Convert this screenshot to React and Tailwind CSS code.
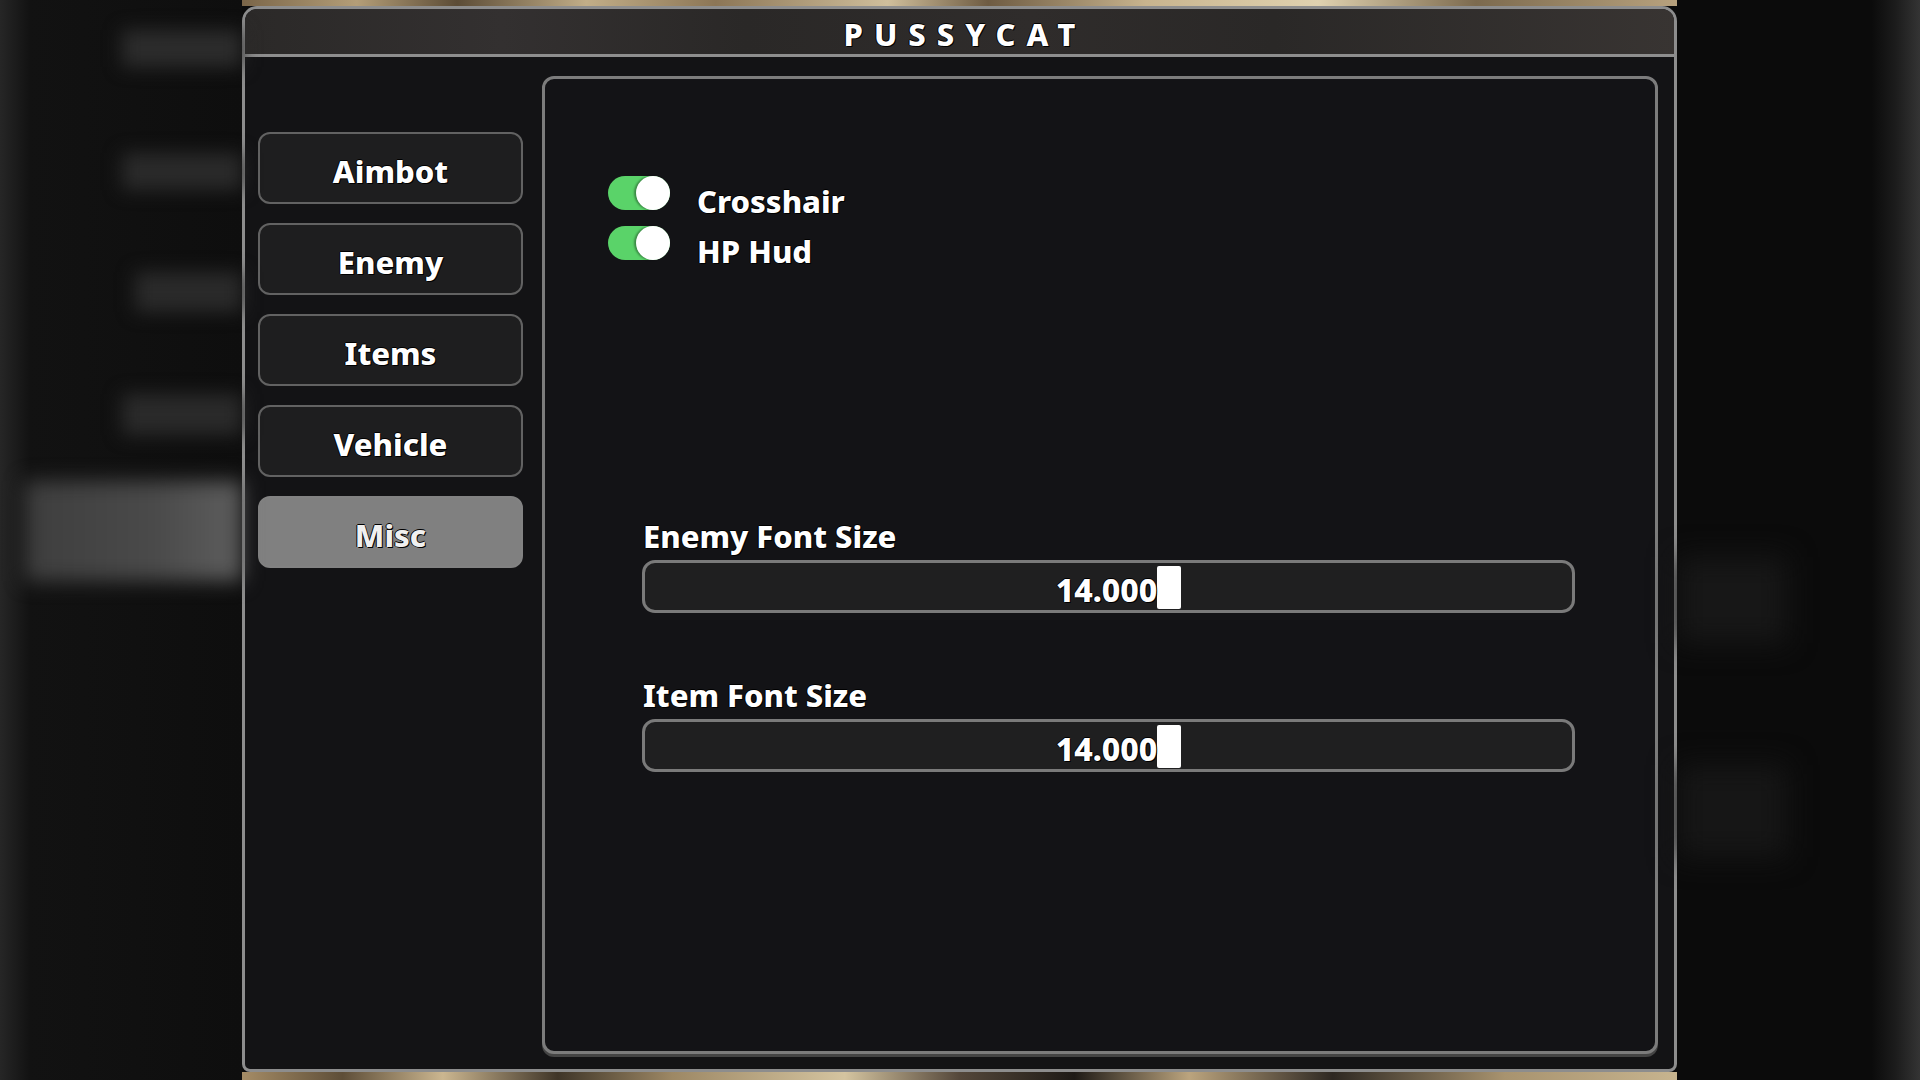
import React from 'react'

const tabs = ['Aimbot', 'Enemy', 'Items', 'Vehicle', 'Misc']

const font = "font-['Noto_Sans',sans-serif] font-extrabold"
const shadow = '[text-shadow:1px_1px_0_#000,-1px_0_0_#000,0_-1px_0_#000]'

function Toggle({ label }) {
  return (
    <div className="flex items-start gap-[27px]">
      <div className="flex h-[34px] w-[62px] items-center justify-end rounded-full bg-[#5ad369]">
        <div className="h-[34px] w-[34px] rounded-full bg-white shadow-[-2px_0_2px_rgba(0,0,0,0.35)]" />
      </div>
      <span className={`${font} ${shadow} pt-[10px] text-[31px] leading-none text-white`}>{label}</span>
    </div>
  )
}

function Slider({ label, value }) {
  return (
    <div className="flex flex-col">
      <span className={`${font} ${shadow} ml-[1px] text-[31px] leading-none text-white`}>{label}</span>
      <div className="relative mt-[8px] flex h-[53px] w-[933px] items-center justify-center rounded-[13px] border-[3px] border-[#7a7a7a] bg-[#1f1f20]">
        <div className="absolute left-[512px] top-[3px] h-[43px] w-[24px] rounded-[2px] bg-white" />
        <span className={`${font} ${shadow} relative ml-[-4px] pt-[6px] text-[32px] leading-none text-white`}>{value.toFixed(3)}</span>
      </div>
    </div>
  )
}

export default function App() {
  return (
    <div className="flex h-screen w-full overflow-hidden bg-[#0c0c0c]">
      {/* blurred backdrop, left */}
      <div className="flex w-[242px] shrink-0 flex-col items-end bg-[linear-gradient(90deg,#262626,#121212_30px,#0e0e0e)]">
        <div className="mt-[30px] h-[37px] w-[120px] bg-[#2c2c2c] blur-[9px]" />
        <div className="mt-[86px] h-[37px] w-[120px] bg-[#2a2a2a] blur-[9px]" />
        <div className="mt-[82px] h-[40px] w-[107px] bg-[#2a2a2a] blur-[9px]" />
        <div className="mt-[82px] h-[41px] w-[120px] bg-[#2a2a2a] blur-[9px]" />
        <div className="mt-[46px] h-[100px] w-[217px] bg-[linear-gradient(90deg,#3e3e3e,#4a4a4a_60%,#5e5e5e)] blur-[10px]" />
      </div>

      {/* window with game texture above and below */}
      <div className="flex w-[1435px] shrink-0 flex-col">
        <div className="h-[6px] bg-[linear-gradient(90deg,#7a6548,#b49e78_8%,#5c4c36_15%,#c2ae88_24%,#8c7656_33%,#d0bf9c_45%,#6e5b42_52%,#c8b48e_63%,#e0d2b0_75%,#7c6a4e_86%,#b8a27e)]" />
        <div className="flex flex-1 flex-col overflow-hidden rounded-t-[15px] rounded-b-[8px] border-[3px] border-[#8d8d8d] bg-[#131315]">
          <div className="flex h-[48px] shrink-0 items-center justify-center border-b-[3px] border-[#8e8e8e] bg-[linear-gradient(90deg,#2b2928,#333030_18%,#2a2827_35%,#2f2c2b_55%,#2a2827_72%,#383432)]">
            <span className={`${font} ${shadow} ml-[11px] pt-[6px] text-[31px] leading-none tracking-[11px] text-white`}>PUSSYCAT</span>
          </div>
          <div className="flex flex-1 pb-[15px] pl-[13px] pr-[16px] pt-[19px]">
            <div className="mt-[56px] flex w-[265px] shrink-0 flex-col gap-[19px]">
              {tabs.map((t) => (
                <div
                  key={t}
                  className={`flex h-[72px] items-center justify-center rounded-[12px] border-2 ${
                    t === 'Misc' ? 'border-[#828282] bg-[#808080]' : 'border-[#626262] bg-[#1e1e1f]'
                  }`}
                >
                  <span className={`${font} ${shadow} pt-[7px] text-[31px] leading-none ${t === 'Misc' ? 'text-[#f0f0f0]' : 'text-white'}`}>{t}</span>
                </div>
              ))}
            </div>
            <div className="ml-[19px] flex flex-1 flex-col rounded-[12px] border-[3px] border-[#7c7c7c] bg-[#131316] pl-[63px] pt-[97px] shadow-[0_3px_0_#444]">
              <div className="flex flex-col gap-[9px]">
                <Toggle label="Crosshair" />
                <Toggle label="HP Hud" />
              </div>
              <div className="ml-[34px] mt-[254px] flex flex-col gap-[67px]">
                <Slider label="Enemy Font Size" value={14} />
                <Slider label="Item Font Size" value={14} />
              </div>
            </div>
          </div>
        </div>
        <div className="h-[8px] bg-[linear-gradient(90deg,#a58c66,#5e4e38_7%,#cbb690_14%,#3f3528_22%,#9d8865_30%,#d4c4a0_42%,#54473a_50%,#1e1a16_58%,#bba47e_66%,#2e2822_76%,#a8936f_88%,#c7b48f)]" />
      </div>

      {/* blurred backdrop, right */}
      <div className="flex flex-1 flex-col bg-[linear-gradient(90deg,#0b0b0b_80%,#1c1c1c_90%,#343434)]">
        <div className="mt-[557px] h-[86px] w-[110px] bg-[#171717] blur-[14px]" />
        <div className="mt-[122px] h-[92px] w-[110px] bg-[#161616] blur-[14px]" />
      </div>
    </div>
  )
}
